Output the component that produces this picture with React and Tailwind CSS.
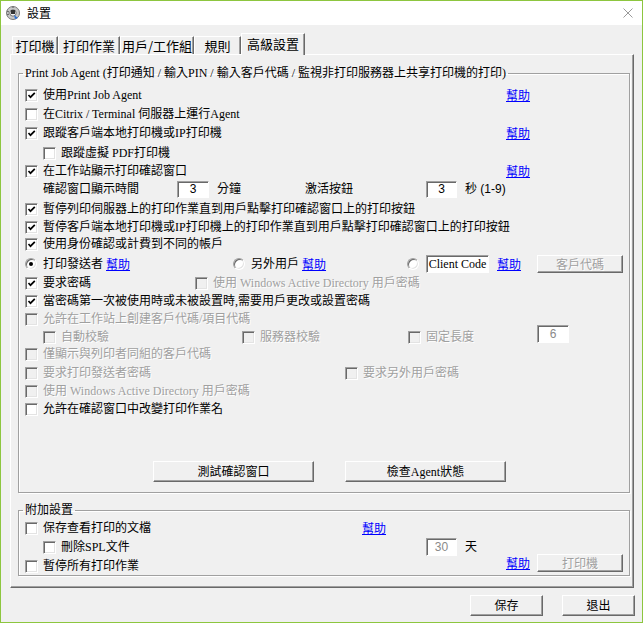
import React from "react";

// classic win32 "設置" dialog, advanced tab
const FONT = "[font-family:'Liberation_Serif','Noto_Sans_CJK_TC',serif]";
const CJK = "[font-family:'Noto_Sans_CJK_TC','Liberation_Sans',sans-serif]";
const SANS = "[font-family:'Liberation_Sans','Noto_Sans_CJK_TC',sans-serif]";
const DIS = "text-[#a0a0a0] [text-shadow:1px_1px_0_#ffffff]";

function Box({ checked, disabled }) {
  return (
    <span
      className={`relative shrink-0 w-[13px] h-[13px] border border-t-[#a0a0a0] border-l-[#a0a0a0] border-r-white border-b-white shadow-[inset_1px_1px_0_#696969,inset_-1px_-1px_0_#e3e3e3] ${
        disabled ? "bg-[#f0f0f0]" : "bg-white"
      }`}
    >
      {checked && (
        <svg viewBox="0 0 11 11" className="absolute inset-0 w-[11px] h-[11px]">
          <polyline points="2.5,5 4.5,7.2 8.8,2.8" fill="none" stroke="#000" strokeWidth="1.7" />
        </svg>
      )}
    </span>
  );
}

function Check({ label, checked, disabled, className = "" }) {
  return (
    <div className={`flex items-center gap-[5px] shrink-0 ${className}`}>
      <Box checked={checked} disabled={disabled} />
      <span className={`whitespace-nowrap ${disabled ? DIS : ""}`}>{label}</span>
    </div>
  );
}

function Radio({ on }) {
  return (
    <span className="relative shrink-0 w-[12px] h-[12px] rounded-full bg-white border border-t-[#a0a0a0] border-l-[#a0a0a0] border-r-white border-b-white shadow-[inset_1px_1px_0_#696969,inset_-1px_-1px_0_#e3e3e3] flex items-center justify-center">
      {on && <span className="w-[4px] h-[4px] rounded-full bg-black" />}
    </span>
  );
}

function Help({ className = "" }) {
  return (
    <span className={`shrink-0 text-[#0000ff] underline whitespace-nowrap ${CJK} ${className}`}>
      幫助
    </span>
  );
}

function Field({ value, className = "", dim }) {
  return (
    <span
      className={`shrink-0 h-[17px] bg-white border border-t-[#a0a0a0] border-l-[#a0a0a0] border-r-white border-b-white shadow-[inset_1px_1px_0_#696969] flex items-center justify-center ${SANS} ${
        dim ? "text-[#8a8a8a]" : "text-black"
      } ${className}`}
    >
      {value}
    </span>
  );
}

function Btn({ children, className = "", disabled }) {
  return (
    <div
      className={`shrink-0 flex items-center justify-center bg-[#f0f0f0] border border-t-white border-l-white border-r-[#696969] border-b-[#696969] shadow-[inset_-1px_-1px_0_#a0a0a0] ${
        disabled ? DIS : "text-black"
      } ${className}`}
    >
      {children}
    </div>
  );
}

function Row({ children, className = "" }) {
  return <div className={`flex items-center h-[18px] ${className}`}>{children}</div>;
}

export default function App() {
  return (
    <div className={`w-[643px] h-[623px] border border-[#8dc63f] bg-[#f0f0f0] flex flex-col text-[12px] leading-[14px] text-black ${FONT}`}>
      {/* title bar */}
      <div className="h-[24px] bg-white flex items-center shrink-0">
        <svg viewBox="0 0 16 16" className="ml-[4px] w-[16px] h-[16px]">
          <circle cx="8" cy="8" r="6.5" fill="#c8c8c8" stroke="#7a7a7a" strokeWidth="1" />
          <circle cx="8" cy="8" r="3.2" fill="#f4f4f4" stroke="#555" strokeWidth="0.8" />
          <path d="M6 5 L10 5 L10 9 L6 9 Z" fill="#333" />
          <path d="M9 10 L13 13 L10 14 Z" fill="#2a6fd6" />
          <path d="M2 6 L4 7 M2 10 L4 9 M8 1.5 L8 3" stroke="#555" strokeWidth="1" />
        </svg>
        <span className={`ml-[6px] text-[12px] ${CJK}`}>設置</span>
        <svg viewBox="0 0 10 10" className="ml-auto mr-[9px] w-[10px] h-[10px]">
          <path d="M0.5 0.5 L9.5 9.5 M9.5 0.5 L0.5 9.5" stroke="#9a9a9a" strokeWidth="1" />
        </svg>
      </div>

      {/* tabs */}
      <div className={`flex items-end h-[21px] mt-[8px] ml-[11px] text-[13px] ${CJK}`}>
        {[
          ["打印機", "w-[46px]"],
          ["打印作業", "w-[62px]"],
          ["用戶/工作組", "w-[74px]"],
          ["規則", "w-[47px]"],
        ].map(([t, w]) => (
          <div
            key={t}
            className={`${w} h-[18px] flex items-center justify-center border-t border-l border-t-white border-l-white border-r border-r-[#696969] shadow-[inset_-1px_0_0_#a0a0a0] leading-[16px]`}
          >
            {t}
          </div>
        ))}
        <div className="relative z-10 w-[64px] h-[22px] -mb-[1px] bg-[#f0f0f0] flex items-start justify-center pt-[2px] border-t border-l border-t-white border-l-white border-r border-r-[#696969] shadow-[inset_-1px_0_0_#a0a0a0] leading-[16px]">
          高級設置
        </div>
      </div>

      {/* panel */}
      <div className="ml-[9px] w-[624px] h-[534px] border border-t-white border-l-white border-r-[#696969] border-b-[#696969] shadow-[inset_-1px_-1px_0_#a0a0a0] pl-[7px] pt-[11px] flex flex-col">
        <fieldset className="w-[608px] border border-[#a0a0a0] shadow-[1px_1px_0_#ffffff,inset_1px_1px_0_#ffffff] px-[6px] pt-[6px] pb-[10px]">
          <legend className="-ml-[2px] px-[2px] leading-[14px] whitespace-nowrap">
            Print Job Agent (打印通知 / 輸入PIN / 輸入客戶代碼 / 監視非打印服務器上共享打印機的打印)
          </legend>

          <Row>
            <Check checked label="使用Print Job Agent" className="w-[481px]" />
            <Help />
          </Row>
          <Row className="mt-[1px]">
            <Check label="在Citrix / Terminal 伺服器上運行Agent" />
          </Row>
          <Row className="mt-[1px]">
            <Check checked label="跟蹤客戶端本地打印機或IP打印機" className="w-[481px]" />
            <Help />
          </Row>
          <Row className="mt-[2px] pl-[18px]">
            <Check label="跟蹤虛擬 PDF打印機" />
          </Row>
          <Row>
            <Check checked label="在工作站顯示打印確認窗口" className="w-[481px]" />
            <Help />
          </Row>
          <Row className="pl-[18px]">
            <span className="w-[134px] shrink-0">確認窗口顯示時間</span>
            <Field value="3" className="w-[32px]" />
            <span className="ml-[8px] w-[88px] shrink-0">分鐘</span>
            <span className="w-[121px] shrink-0">激活按鈕</span>
            <Field value="3" className="w-[31px]" />
            <span className={`ml-[8px] ${SANS}`}>秒 (1-9)</span>
          </Row>
          <Row className="mt-[2px]">
            <Check checked label="暫停列印伺服器上的打印作業直到用戶點擊打印確認窗口上的打印按鈕" />
          </Row>
          <Row>
            <Check checked label="暫停客戶端本地打印機或IP打印機上的打印作業直到用戶點擊打印確認窗口上的打印按鈕" />
          </Row>
          <Row className="-mt-[1px]">
            <Check checked label="使用身份確認或計費到不同的帳戶" />
          </Row>
          <Row className="mt-[2px]">
            <div className="w-[208px] shrink-0 flex items-center">
              <Radio on />
              <span className="ml-[6px]">打印發送者</span>
              <Help className="ml-[3px]" />
            </div>
            <div className="w-[174px] shrink-0 flex items-center">
              <Radio />
              <span className="ml-[6px]">另外用戶</span>
              <Help className="ml-[3px]" />
            </div>
            <Radio />
            <Field value="Client Code" className={`ml-[7px] w-[63px] h-[18px] ${FONT}`} />
            <Help className="ml-[8px]" />
            <Btn disabled className={`ml-[16px] w-[86px] h-[18px] ${CJK}`}>
              客戶代碼
            </Btn>
          </Row>
          <Row className="mt-[1px]">
            <Check checked label="要求密碼" className="w-[170px]" />
            <Check disabled label="使用 Windows Active Directory 用戶密碼" />
          </Row>
          <Row>
            <Check checked label="當密碼第一次被使用時或未被設置時,需要用戶更改或設置密碼" />
          </Row>
          <Row>
            <Check disabled label="允許在工作站上創建客戶代碼/項目代碼" />
          </Row>
          <Row className="pl-[18px]">
            <Check disabled label="自動校驗" className="w-[199px]" />
            <Check disabled label="服務器校驗" className="w-[166px]" />
            <Check disabled label="固定長度" className="w-[129px]" />
            <Field value="6" dim className="w-[32px] h-[18px] -mt-[6px]" />
          </Row>
          <Row className="-mt-[1px]">
            <Check disabled label="僅顯示與列印者同組的客戶代碼" />
          </Row>
          <Row className="mt-[1px]">
            <Check disabled label="要求打印發送者密碼" className="w-[320px]" />
            <Check disabled label="要求另外用戶密碼" />
          </Row>
          <Row>
            <Check disabled label="使用 Windows Active Directory 用戶密碼" />
          </Row>
          <Row>
            <Check label="允許在確認窗口中改變打印作業名" />
          </Row>

          <div className="flex mt-[43px] ml-[128px] gap-[31px]">
            <Btn className="w-[161px] h-[21px]">測試確認窗口</Btn>
            <Btn className="w-[161px] h-[21px]">檢查Agent狀態</Btn>
          </div>
        </fieldset>

        <fieldset className="mt-[10px] w-[608px] border border-[#a0a0a0] shadow-[1px_1px_0_#ffffff,inset_1px_1px_0_#ffffff] px-[6px] pt-[2px] pb-0">
          <legend className="-ml-[2px] px-[2px] leading-[14px] whitespace-nowrap">附加設置</legend>
          <Row>
            <Check label="保存查看打印的文檔" className="w-[337px]" />
            <Help />
          </Row>
          <Row className="mt-[1px] pl-[18px]">
            <Check label="刪除SPL文件" className="w-[383px]" />
            <Field value="30" dim className="w-[31px] h-[18px]" />
            <span className="ml-[8px]">天</span>
          </Row>
          <Row className="mt-[1px]">
            <Check label="暫停所有打印作業" className="w-[481px]" />
            <Help className="-mt-[6px]" />
            <Btn disabled className={`ml-[7px] w-[86px] h-[18px] mb-[6px] ${CJK}`}>
              打印機
            </Btn>
          </Row>
        </fieldset>
      </div>

      {/* footer buttons */}
      <div className="flex justify-end gap-[19px] mt-[7px] pr-[7px]">
        <Btn className="w-[73px] h-[21px]">保存</Btn>
        <Btn className="w-[73px] h-[21px]">退出</Btn>
      </div>
    </div>
  );
}
